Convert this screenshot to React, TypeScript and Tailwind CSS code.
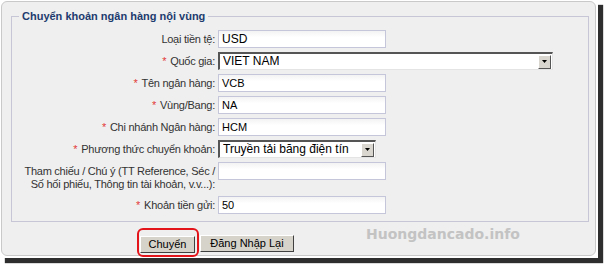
import React from "react";

type Row = {
  label: string;
  required?: boolean;
  kind: "input" | "select";
  value: string;
  width: string;
  valueSize?: string;
};

const rows: Row[] = [
  { label: "Loại tiền tệ:", kind: "input", value: "USD", width: "w-[168px]", valueSize: "text-[12px]" },
  { label: "Quốc gia:", required: true, kind: "select", value: "VIET NAM", width: "w-[335px]" },
  { label: "Tên ngân hàng:", required: true, kind: "input", value: "VCB", width: "w-[168px]" },
  { label: "Vùng/Bang:", required: true, kind: "input", value: "NA", width: "w-[168px]" },
  { label: "Chi nhánh Ngân hàng:", required: true, kind: "input", value: "HCM", width: "w-[168px]" },
  { label: "Phương thức chuyển khoản:", required: true, kind: "select", value: "Truyền tải bằng điện tín", width: "w-[158px]" },
];

function Star() {
  return <span className="mr-[4px] text-[#e23a3a]">*</span>;
}

function TextBox({ value, width, size }: { value: string; width: string; size?: string }) {
  return (
    <div
      className={`${width} flex h-[18px] items-center border border-[#c6c6da] bg-gradient-to-b from-[#f3f3f3] to-white to-40% px-[3px] tracking-normal text-black ${size ?? "text-[11px]"}`}
    >
      {value}
    </div>
  );
}

function SelectBox({ value, width }: { value: string; width: string }) {
  return (
    <div
      className={`${width} flex h-[18px] items-center border-t-2 border-l-2 border-r border-b border-t-[#555] border-l-[#555] border-r-[#e4e4e4] border-b-[#e4e4e4] bg-white pl-[3px] pr-[1px] text-[12px] tracking-normal text-black`}
    >
      <span className="flex-1 truncate">{value}</span>
      <span className="flex h-[14px] w-[13px] items-center justify-center border border-t-white border-l-white border-r-[#555] border-b-[#555] bg-[#d8d6ce]">
        <svg width="5" height="3" viewBox="0 0 5 3">
          <path d="M0 0h5L2.5 3z" fill="#000" />
        </svg>
      </span>
    </div>
  );
}

function Button({ children, className }: { children: React.ReactNode; className?: string }) {
  return (
    <button
      type="button"
      className={`h-[17px] border border-t-white border-l-white border-r-[#404040] border-b-[#404040] bg-[#d6d3cb] text-[11px] leading-none text-black ${className ?? ""}`}
    >
      {children}
    </button>
  );
}

export default function App() {
  return (
    <div className="h-[264px] w-[604px] overflow-hidden bg-white font-['Liberation_Sans',Arial,sans-serif] text-[#333]">
      <div className="h-[258px] w-[598px] bg-white p-[1px] shadow-[5px_5px_1px_#2e2e2e]">
        <div className="relative h-[255px] w-[595px] rounded-[6px] border border-[#c9c9c9] bg-[#efefef]">
          <fieldset className="ml-[9px] mt-[8px] w-[578px] border border-[#c6c6d6] pb-[7px] pt-[7px]">
            <legend className="ml-[7px] px-[3px] text-[11px] font-bold leading-[13px] text-[#1d3b6e]">
              Chuyển khoản ngân hàng nội vùng
            </legend>
            <div className="grid grid-cols-[203px_1fr] gap-x-[3px] gap-y-[4px] text-[11px] leading-[13px] tracking-[-0.25px]">
              {rows.map((row) => (
                <React.Fragment key={row.label}>
                  <div className="flex h-[18px] items-center justify-end whitespace-nowrap">
                    {row.required && <Star />}
                    {row.label}
                  </div>
                  {row.kind === "input" ? (
                    <TextBox value={row.value} width={row.width} size={row.valueSize} />
                  ) : (
                    <SelectBox value={row.value} width={row.width} />
                  )}
                </React.Fragment>
              ))}
              <div className="flex h-[30px] flex-col items-end whitespace-nowrap pt-[3px]">
                <span>Tham chiếu / Chú ý (TT Reference, Séc /</span>
                <span>Số hối phiếu, Thông tin tài khoản, v.v...):</span>
              </div>
              <div>
                <TextBox value="" width="w-[168px]" />
              </div>
              <div className="flex h-[18px] items-center justify-end whitespace-nowrap">
                <Star />
                Khoản tiền gửi:
              </div>
              <TextBox value="50" width="w-[168px]" />
            </div>
          </fieldset>

          <div className="ml-[138px] mt-[9px] flex items-center gap-[5px]">
            <div className="relative">
              <Button className="w-[55px]">Chuyển</Button>
              <span className="pointer-events-none absolute -bottom-[2px] -left-[3px] -right-[4px] -top-[3px] rounded-[6px] border-2 border-[#e4141b]" />
            </div>
            <Button className="w-[94px]">Đăng Nhập Lại</Button>
          </div>

          <span className="absolute left-[364px] top-[222px] font-['DejaVu_Sans',sans-serif] text-[14px] font-bold text-[#c3c3c3]">
            Huongdancado.info
          </span>
        </div>
      </div>
    </div>
  );
}
